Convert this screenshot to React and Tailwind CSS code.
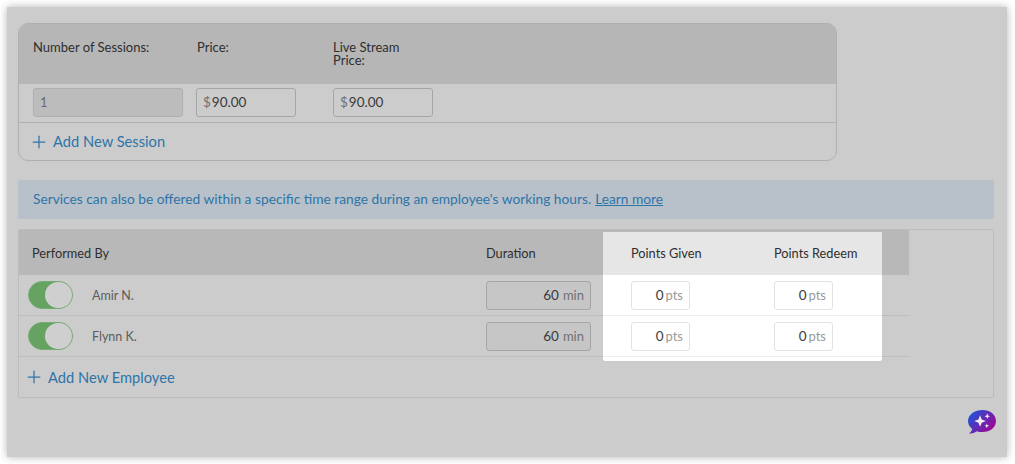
import React from 'react'
import { Plus } from 'lucide-react'

const EMPLOYEES = ['Amir N.', 'Flynn K.']
const FONT = { fontFamily: 'Lato, sans-serif' }

function Toggle() {
  return (
    <div className="w-[45px] h-[28px] rounded-full bg-[#66a363] border border-[#74ad72] flex justify-end shrink-0">
      <div className="w-[27px] h-[26px] rounded-full bg-[#cfcfcf]" />
    </div>
  )
}

function MoneyInput() {
  return (
    <div className="w-[100px] h-[29px] rounded-[3px] border border-[#a6a6a6] flex items-center pl-[6px] text-[13.5px] text-[#3a3a3a]">
      <span><span className="text-[#707070] mr-[1px]">$</span>90.00</span>
    </div>
  )
}

function PtsInput() {
  return (
    <div className="w-[59px] h-[29px] rounded-[3px] border border-[#e2e2e2] bg-white flex items-center justify-end pr-[6px] text-[13.5px] text-[#3a3a3a]">
      <span>0<span className="text-[#9a9a9a] ml-[2px] text-[13px]">pts</span></span>
    </div>
  )
}

function AddLink({ label, className }) {
  return (
    <div className={`flex items-center text-[14.7px] text-[#2f74a8] ${className}`}>
      <Plus className="w-[20px] h-[20px] ml-[-4px] mr-[4px]" strokeWidth={1.5} />
      {label}
    </div>
  )
}

export default function App() {
  return (
    <div className="w-[1015px] h-[464px] bg-white p-[7px] overflow-hidden" style={FONT}>
      <div className="relative w-[1000px] h-[450px] bg-[#cccccc] shadow-[0_0_8px_rgba(0,0,0,0.3)] px-[11px] pt-[16px]">
        <div className="w-[819px] h-[138px] rounded-[10px] border border-[#b0b0b0] overflow-hidden">
          <div className="h-[60px] bg-[#b6b6b6] flex pl-[14px] pt-[17px] text-[13px] leading-[13px] text-[#2e2e2e]">
            <div className="w-[164px]">Number of Sessions:</div>
            <div className="w-[136px]">Price:</div>
            <div className="w-[80px]">Live Stream Price:</div>
          </div>
          <div className="h-[39px] flex items-start pt-[4px] pl-[14px] border-b border-[#b0b0b0]">
            <div className="w-[150px] h-[29px] mr-[13px] rounded-[3px] border border-[#b0b0b0] bg-[#bcbcbc] flex items-center pl-[6px] text-[13px] text-[#6a6a6a]">1</div>
            <div className="mr-[37px]"><MoneyInput /></div>
            <MoneyInput />
          </div>
          <AddLink label="Add New Session" className="h-[37px] pl-[14px]" />
        </div>

        <div className="mt-[19px] w-[976px] h-[39px] rounded-[2px] bg-[#b8c1c9] flex items-center pl-[15px] text-[13.75px] text-[#2f74a8]">
          <span>Services can also be offered within a specific time range during an employee's working hours.</span>
          <span className="ml-[4px] underline">Learn more</span>
        </div>

        <div className="mt-[10px] w-[976px] h-[169px] rounded-[2px] border border-[#bcbcbc]">
          <div className="w-[890px] h-[45px] bg-[#b8b8b8] flex items-center pl-[13px] pt-[3px] text-[12.75px] text-[#2e2e2e]">
            <div className="w-[454px]">Performed By</div>
            <div>Duration</div>
          </div>
          {EMPLOYEES.map((name) => (
            <div key={name} className="w-[890px] h-[41px] border-b border-[#bdbdbd] flex items-center pl-[9px] text-[12.5px] text-[#5c5c5c]">
              <Toggle />
              <div className="ml-[19px] w-[394px] mt-[2px]">{name}</div>
              <div className="w-[105px] h-[29px] rounded-[3px] border border-[#a6a6a6] bg-[#c6c6c6] flex items-center justify-end pr-[6px] text-[13.5px] text-[#3a3a3a]">
                <span>60<span className="text-[#707070] ml-[4px] text-[13px]">min</span></span>
              </div>
            </div>
          ))}
          <AddLink label="Add New Employee" className="h-[40px] pl-[9px]" />
        </div>

        <div className="absolute left-[596px] top-[225px] w-[279px] h-[129px] bg-white rounded-[2px] text-[12.75px] text-[#2e2e2e]">
          <div className="h-[43px] bg-[#e6e6e6] rounded-t-[2px] flex items-center pl-[28px]">
            <div className="w-[143px]">Points Given</div>
            <div>Points Redeem</div>
          </div>
          {[0, 1].map((i) => (
            <div key={i} className="h-[41px] border-b border-[#eeeeee] flex items-center pl-[28px]">
              <div className="w-[143px]"><PtsInput /></div>
              <PtsInput />
            </div>
          ))}
        </div>

        <svg className="absolute left-[960px] top-[402px]" width="30" height="26" viewBox="0 0 31 27">
          <defs>
            <linearGradient id="chat" x1="0" y1="0.1" x2="1" y2="0.8">
              <stop offset="0.1" stopColor="#2450d6" />
              <stop offset="1" stopColor="#a8008f" />
            </linearGradient>
          </defs>
          <path d="M16 1c8 0 14 4.800 14 11.500S24 24 16 24c-2.200 0-4.200-.3-6-1-2 1.500-4.500 2.300-8 2.500 1.700-1.300 3-3 3.300-4.800C2.700 18.600 1 15.800 1 12.500 1 5.800 8 1 16 1z" fill="url(#chat)" />
          <path d="M13.500 6.500l1.700 4.300 4.300 1.700-4.300 1.700-1.700 4.300-1.700-4.300-4.300-1.700 4.300-1.700z" fill="#eeeeee" />
          <path d="M21 4.500l.8 2.200 2.200.8-2.200.8-.8 2.200-.8-2.200-2.200-.8 2.200-.8z" fill="#eeeeee" />
          <path d="M20.500 15l.7 1.800 1.800.7-1.800.7-.7 1.800-.7-1.800-1.800-.7 1.800-.7z" fill="#eeeeee" />
        </svg>
      </div>
    </div>
  )
}
